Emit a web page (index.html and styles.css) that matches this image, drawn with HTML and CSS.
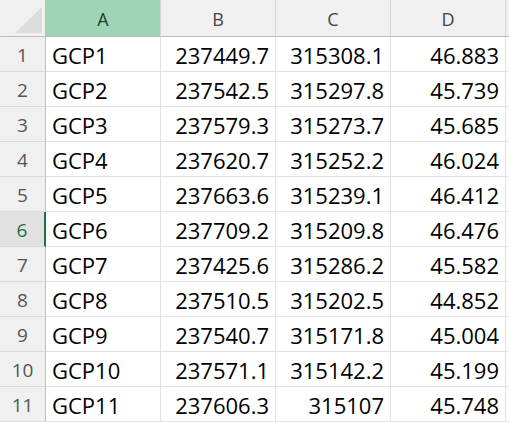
FILE: index.html
```html
<!DOCTYPE html>
<html>
<head>
<meta charset="utf-8">
<link rel="stylesheet" href="styles.css">
</head>
<body>
<div class="sheet">
  <div class="corner"><span class="tri"></span></div>
  <div class="colhead sel">A</div>
  <div class="colhead">B</div>
  <div class="colhead">C</div>
  <div class="colhead">D</div>
  <div class="colhead tail"></div>

  <div class="rowhead">1</div><div class="cell txt">GCP1</div><div class="cell">237449.7</div><div class="cell">315308.1</div><div class="cell">46.883</div><div class="cell tail"></div>
  <div class="rowhead">2</div><div class="cell txt">GCP2</div><div class="cell">237542.5</div><div class="cell">315297.8</div><div class="cell">45.739</div><div class="cell tail"></div>
  <div class="rowhead">3</div><div class="cell txt">GCP3</div><div class="cell">237579.3</div><div class="cell">315273.7</div><div class="cell">45.685</div><div class="cell tail"></div>
  <div class="rowhead">4</div><div class="cell txt">GCP4</div><div class="cell">237620.7</div><div class="cell">315252.2</div><div class="cell">46.024</div><div class="cell tail"></div>
  <div class="rowhead">5</div><div class="cell txt">GCP5</div><div class="cell">237663.6</div><div class="cell">315239.1</div><div class="cell">46.412</div><div class="cell tail"></div>
  <div class="rowhead active">6</div><div class="cell txt">GCP6</div><div class="cell">237709.2</div><div class="cell">315209.8</div><div class="cell">46.476</div><div class="cell tail"></div>
  <div class="rowhead">7</div><div class="cell txt">GCP7</div><div class="cell">237425.6</div><div class="cell">315286.2</div><div class="cell">45.582</div><div class="cell tail"></div>
  <div class="rowhead">8</div><div class="cell txt">GCP8</div><div class="cell">237510.5</div><div class="cell">315202.5</div><div class="cell">44.852</div><div class="cell tail"></div>
  <div class="rowhead">9</div><div class="cell txt">GCP9</div><div class="cell">237540.7</div><div class="cell">315171.8</div><div class="cell">45.004</div><div class="cell tail"></div>
  <div class="rowhead">10</div><div class="cell txt">GCP10</div><div class="cell">237571.1</div><div class="cell">315142.2</div><div class="cell">45.199</div><div class="cell tail"></div>
  <div class="rowhead">11</div><div class="cell txt">GCP11</div><div class="cell">237606.3</div><div class="cell">315107</div><div class="cell">45.748</div><div class="cell tail"></div>
</div>
</body>
</html>
```
FILE: styles.css
```css
html, body {
  margin: 0;
  padding: 0;
  background: #ffffff;
  overflow: hidden;
}
.sheet {
  display: grid;
  grid-template-columns: 46px 115px 115px 115px 115px 1fr;
  grid-template-rows: 37px repeat(11, 35px);
  width: 509px;
  font-family: "Open Sans", "Noto Sans", sans-serif;
}
.corner {
  background: #f0f0f0;
  border-right: 1px solid #bdbdbd;
  border-bottom: 1px solid #bdbdbd;
  position: relative;
}
.tri {
  position: absolute;
  right: 3px;
  bottom: 3px;
  width: 0;
  height: 0;
  border-left: 27px solid transparent;
  border-bottom: 26px solid #dcdcdc;
}
.colhead {
  background: #f0f0f0;
  border-right: 1px solid #d6d6d6;
  border-bottom: 1px solid #bdbdbd;
  color: #444444;
  font-size: 18px;
  display: flex;
  align-items: center;
  justify-content: center;
  padding-top: 1px;
}
.colhead.sel {
  background: #9fd5b7;
  color: #1f3d2c;
}
.colhead.tail {
  border-right: none;
}
.rowhead {
  background: #f0f0f0;
  border-right: 1px solid #bdbdbd;
  border-bottom: 1px solid #dadada;
  color: #555555;
  font-size: 19px;
  display: flex;
  align-items: center;
  justify-content: center;
  padding-top: 2px;
}
.rowhead.active {
  background: #e1e1e1;
  color: #1e7145;
  border-right: 2px solid #1e7145;
}
.cell {
  border-right: 1px solid #e1e1e1;
  border-bottom: 1px solid #e1e1e1;
  color: #000000;
  font-size: 22px;
  display: flex;
  align-items: center;
  justify-content: flex-end;
  padding: 2px 6px 0 0;
  white-space: nowrap;
}
.cell.txt {
  justify-content: flex-start;
  padding: 2px 0 0 6px;
}
.cell.tail {
  border-right: none;
  padding: 0;
}
```
